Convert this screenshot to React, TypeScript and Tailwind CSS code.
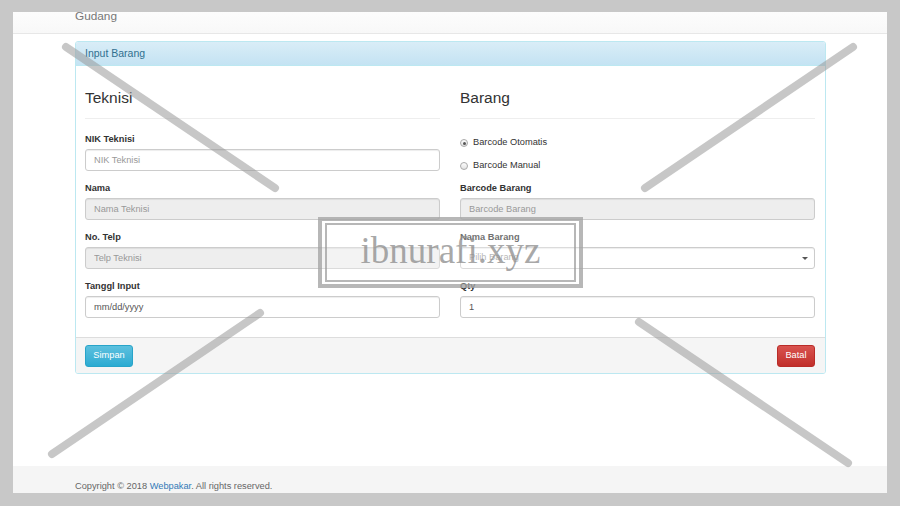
import React from "react";

interface FieldProps {
  label: string;
  placeholder?: string;
  value?: string;
  disabled?: boolean;
}

const inputCls =
  "block h-[22px] w-full rounded-[3px] border border-[#ccc] px-[8px] text-[9.25px] text-[#555] placeholder:text-[#999] outline-none shadow-[inset_0_1px_1px_rgba(0,0,0,0.075)]";

const Field = ({ label, placeholder, value, disabled }: FieldProps) => (
  <div className="mb-[11px]">
    <label className="block h-[13px] mb-[3px] text-[9.25px] leading-[13px] font-bold text-[#333]">
      {label}
    </label>
    <input
      type="text"
      placeholder={placeholder}
      value={value}
      readOnly
      disabled={disabled}
      className={`${inputCls} ${disabled ? "bg-[#eee]" : "bg-white"}`}
    />
  </div>
);

const Radio = ({ label, checked }: { label: string; checked?: boolean }) => (
  <div className="flex items-center">
    <span className="flex items-center justify-center w-[8px] h-[8px] mr-[5px] rounded-full border border-[#a9a9a9] bg-gradient-to-b from-[#fdfdfd] to-[#e2e2e2]">
      {checked && <span className="block w-[3px] h-[3px] rounded-full bg-[#555]" />}
    </span>
    <span className="text-[9.25px] text-[#333]">{label}</span>
  </div>
);

const App = () => {
  return (
    <div className="relative w-[900px] h-[506px] overflow-hidden bg-white font-['Liberation_Sans',Arial,sans-serif] flex flex-col">
      {/* navbar */}
      <div className="h-[34px] shrink-0 bg-gradient-to-b from-white to-[#f8f8f8] border-b border-[#e7e7e7] pl-[75px] pt-[9px]">
        <span className="block text-[11.8px] leading-[15px] text-[#777]">Gudang</span>
      </div>

      {/* content */}
      <div className="pl-[75px] pt-[7px]">
        <div className="w-[751px] rounded-[3px] border border-[#bce8f1] bg-white">
          <div className="h-[24px] flex items-center px-[9px] bg-gradient-to-b from-[#d9edf7] to-[#c4e3f3] border-b border-[#bce8f1] rounded-t-[2px]">
            <span className="text-[10.5px] text-[#31708f]">Input Barang</span>
          </div>

          <div className="pl-[9px] pr-[10px] pt-[22px] pb-[8px] flex gap-[20px]">
            {/* Teknisi */}
            <div className="w-[355px]">
              <h3 className="text-[15.5px] leading-[20px] text-[#333] mb-[10px]">Teknisi</h3>
              <div className="h-px bg-[#eee]" />
              <div className="mt-[14px]">
                <Field label="NIK Teknisi" placeholder="NIK Teknisi" />
                <Field label="Nama" placeholder="Nama Teknisi" disabled />
                <Field label="No. Telp" placeholder="Telp Teknisi" disabled />
                <Field label="Tanggl Input" value="mm/dd/yyyy" />
              </div>
            </div>

            {/* Barang */}
            <div className="w-[355px]">
              <h3 className="text-[15.5px] leading-[20px] text-[#333] mb-[10px]">Barang</h3>
              <div className="h-px bg-[#eee]" />
              <div className="mt-[13px]">
                <div className="h-[22px] flex items-center">
                  <Radio label="Barcode Otomatis" checked />
                </div>
                <div className="h-[23px] flex items-center">
                  <Radio label="Barcode Manual" />
                </div>
              </div>
              <div className="mt-[5px]">
                <Field label="Barcode Barang" placeholder="Barcode Barang" disabled />
                <div className="mb-[11px]">
                  <label className="block h-[13px] mb-[3px] text-[9.25px] leading-[13px] font-bold text-[#333]">
                    Nama Barang
                  </label>
                  <div className="relative">
                    <select className={`${inputCls} appearance-none bg-white text-[#999]`} defaultValue="">
                      <option value="">Pilih Barang</option>
                    </select>
                    <span className="absolute right-[7px] top-[10px] w-0 h-0 border-l-[3px] border-r-[3px] border-t-[3px] border-l-transparent border-r-transparent border-t-[#555]" />
                  </div>
                </div>
                <Field label="Qty" value="1" />
              </div>
            </div>
          </div>

          <div className="flex justify-between bg-[#f5f5f5] border-t border-[#ddd] pl-[9px] pr-[10px] pt-[7px] pb-[6px] rounded-b-[2px]">
            <button className="w-[48px] h-[22px] rounded-[3px] border border-[#28a4c9] bg-gradient-to-b from-[#5bc0de] to-[#2aabd2] text-[9.25px] text-white">
              Simpan
            </button>
            <button className="w-[38px] h-[22px] rounded-[3px] border border-[#b92c28] bg-gradient-to-b from-[#d9534f] to-[#c12e2a] text-[9.25px] text-white">
              Batal
            </button>
          </div>
        </div>
      </div>

      {/* footer */}
      <div className="mt-auto h-[40px] shrink-0 bg-[#f5f5f5] pl-[75px] pt-[14px]">
        <p className="text-[9.25px] leading-[13px] text-[#666]">
          Copyright © 2018 <span className="text-[#337ab7]">Webpakar</span>. All rights reserved.
        </p>
      </div>

      {/* watermark overlay */}
      <svg className="absolute inset-0 pointer-events-none" width="900" height="506">
        <g stroke="#999" strokeOpacity="0.55" strokeWidth="8" strokeLinecap="round">
          <line x1="66" y1="47" x2="275" y2="188" />
          <line x1="853" y1="47" x2="645" y2="188" />
          <line x1="260" y1="313" x2="52" y2="454" />
          <line x1="639" y1="322" x2="848" y2="463" />
        </g>
      </svg>

      <div className="absolute left-[318px] top-[217px] w-[265px] h-[71px] border-4 border-[#999]/70 bg-white/30 pointer-events-none">
        <div className="absolute left-[3px] right-[3px] top-[2px] bottom-[2px] border-2 border-[#999]/70" />
        <span className="absolute left-0 right-0 top-[10px] text-center text-[37px] leading-[40px] text-[#8c8c8c]/75 font-['Liberation_Serif','Times_New_Roman',serif]">
          ibnurafi.xyz
        </span>
      </div>

      {/* frame */}
      <div className="absolute inset-0 border-t-[12px] border-l-[13px] border-r-[13px] border-b-[13px] border-[#c8c8c8] pointer-events-none" />
    </div>
  );
};

export default App;
